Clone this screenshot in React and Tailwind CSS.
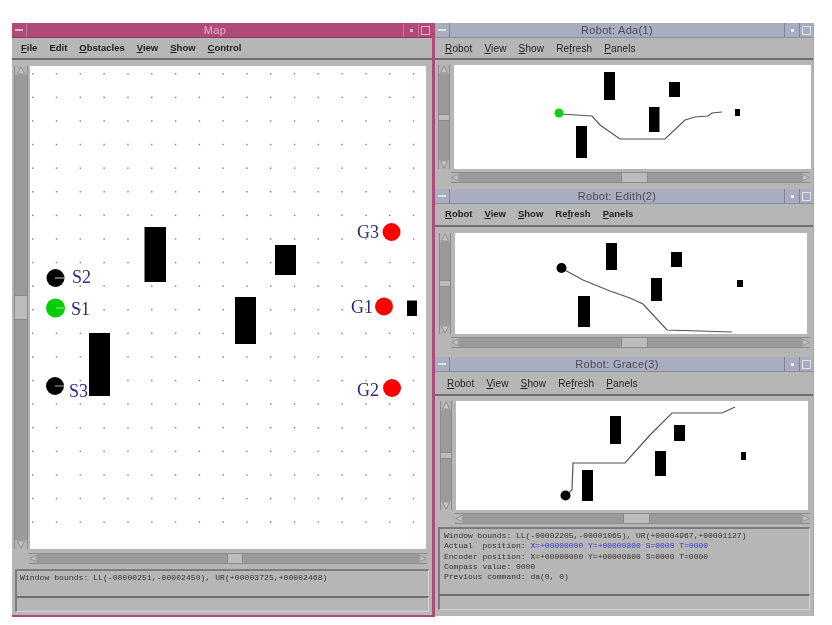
import React from 'react';

// Dot grid of the map canvas, in page coordinates
const DOT_XS = Array.from({ length: 17 }, (_, i) => 32 + i * 23.8);
const DOT_YS = Array.from({ length: 20 }, (_, i) => 73 + i * 23.6);

const MAP_RECTS = [
  [144.5, 227, 21.5, 55],
  [275, 245, 21, 30],
  [235, 297, 21, 47],
  [89, 333, 21, 63],
  [407, 300.5, 10, 15.5],
];

const MAP_LABELS = [
  ['S2', 72, 283],
  ['S1', 71, 315],
  ['S3', 69, 397],
  ['G3', 357, 238],
  ['G1', 351, 313],
  ['G2', 357, 396],
];

const ROBOTS = {
  ada: {
    box: '454 65 357 104',
    rects: [[604, 72, 11, 28], [669, 82, 11, 15], [649, 107, 10.5, 25], [576, 126, 11, 32], [735, 109, 5, 7]],
    robot: [559, 113, 4.5, '#10d010'],
    path: '560,114 592,116 600,125 620,139 665,139 685,120 695,117 708,116 712,113 722,112',
  },
  edith: {
    box: '455 233 352 101',
    rects: [[606, 243, 11, 27], [671, 252, 11, 15], [651, 278, 11, 23], [578, 296, 12, 31], [737, 280, 6, 7]],
    robot: [561.5, 268, 5, '#000'],
    path: '561,268 583,280 610,291 630,298 643,304 667,330 700,331 732,332',
  },
  grace: {
    box: '456 401 352 109',
    rects: [[610, 416, 11, 28], [674, 425, 11, 16], [655, 451, 11, 25], [582, 470, 11, 31], [741, 452, 5, 8]],
    robot: [565.5, 495.5, 5, '#000'],
    path: '566,495 572,490 573,463 625,463 650,435 672,413 722,413 735,407',
  },
};

function TitleBar({ title, pink }) {
  const bar = pink ? 'bg-[#b04a78] text-[#e2b4c8] border-[#8e3a60]' : 'bg-[#a9adc0] text-[#4c4c54] border-[#8a8d9e]';
  const btn = pink ? 'border-[#c77a9c]' : 'border-[#7f8294]';
  return (
    <div className={`flex h-[15px] shrink-0 items-stretch border-b ${bar}`}>
      <div className={`flex w-[15px] shrink-0 items-center justify-center border-r ${btn}`}>
        <span className={`h-[2px] w-[8px] ${pink ? 'bg-[#e0b0c4]' : 'bg-[#dfe0e8]'}`} />
      </div>
      <div className="flex-1 text-center font-['Liberation_Sans',sans-serif] text-[11px] leading-[14px] tracking-[0.3px]">{title}</div>
      <div className={`flex w-[15px] shrink-0 items-center justify-center border-l ${btn}`}>
        <span className={`h-[3px] w-[3px] ${pink ? 'bg-[#e0b0c4]' : 'bg-[#eceded]'}`} />
      </div>
      <div className={`flex w-[14px] shrink-0 items-center justify-center border-l ${btn}`}>
        <span className={`h-[9px] w-[9px] border ${pink ? 'border-[#e0b0c4]' : 'border-[#dfe0e8]'}`} />
      </div>
    </div>
  );
}

function MenuBar({ items, bold, height, left }) {
  return (
    <div
      className={`flex shrink-0 items-center gap-3 border-b-2 border-[#6e6e6e] bg-[#b6b6b6] font-['Liberation_Sans',sans-serif] text-[#222] ${bold ? 'text-[9.5px] font-bold' : 'text-[10px] tracking-[0.15px]'}`}
      style={{ height, paddingLeft: left }}
    >
      {items.map(([head, mark, tail]) => (
        <span key={head + mark + tail}>
          {head}
          <span className="underline">{mark}</span>
          {tail}
        </span>
      ))}
    </div>
  );
}

// Small triangle cap at the end of a scrollbar
function Arrow({ points, className }) {
  return (
    <svg viewBox="0 0 10 10" className={`shrink-0 bg-[#b4b4b4] ${className}`}>
      <polygon points={points} fill="#c4c4c4" stroke="#8a8a8a" strokeWidth="1" />
    </svg>
  );
}

function HScroll({ before, after, thumb }) {
  return (
    <div className="flex h-[11px] items-stretch border-y border-[#8b8b8b] bg-[#9a9a9a]">
      <Arrow points="1,5 9,1 9,9" className="w-[8px]" />
      <span style={{ flexGrow: before }} />
      <span className="shrink-0 border-x border-[#8b8b8b] bg-[#bcbcbc]" style={{ width: thumb }} />
      <span style={{ flexGrow: after }} />
      <Arrow points="9,5 1,1 1,9" className="w-[8px]" />
    </div>
  );
}

function VScroll({ before, after, width, thumb }) {
  return (
    <div className="flex shrink-0 flex-col items-stretch border-x border-[#8b8b8b] bg-[#9a9a9a]" style={{ width }}>
      <Arrow points="5,1 1,9 9,9" className="h-[9px] w-full" />
      <span style={{ flexGrow: before }} />
      <span className="shrink-0 border-y border-[#8b8b8b] bg-[#bcbcbc]" style={{ height: thumb }} />
      <span style={{ flexGrow: after }} />
      <Arrow points="5,9 1,1 9,1" className="h-[9px] w-full" />
    </div>
  );
}

function MapCanvas() {
  return (
    <svg viewBox="30 66 396 483" className="h-[483px] w-[396px] shrink-0 bg-white">
      {DOT_YS.map((y) => DOT_XS.map((x) => (
        <rect key={`${x}-${y}`} x={x} y={y} width="1.5" height="1.5" fill="#8c8c8c" />
      )))}
      {MAP_RECTS.map(([x, y, w, h]) => <rect key={x} x={x} y={y} width={w} height={h} fill="#000" />)}
      <circle cx="55.5" cy="278" r="9" fill="#000" />
      <line x1="55" y1="278" x2="64" y2="278" stroke="#888" strokeWidth="1.5" />
      <circle cx="55.5" cy="308" r="9.5" fill="#00d000" />
      <line x1="56" y1="308" x2="64" y2="308" stroke="#9ee69e" strokeWidth="1" />
      <circle cx="55" cy="386" r="9" fill="#000" />
      <line x1="55" y1="386" x2="64" y2="386" stroke="#aaa" strokeWidth="1" />
      <circle cx="391.5" cy="232" r="9" fill="#ff0000" />
      <circle cx="384" cy="306.5" r="9" fill="#ff0000" />
      <circle cx="392" cy="388" r="9" fill="#ff0000" />
      {MAP_LABELS.map(([text, x, y]) => (
        <text key={text} x={x} y={y} fill="#2a2a80" fontSize="18" fontFamily="'Liberation Serif', serif">{text}</text>
      ))}
    </svg>
  );
}

function RobotCanvas({ data, className }) {
  const [cx, cy, r, fill] = data.robot;
  return (
    <svg viewBox={data.box} className={`shrink-0 bg-white ${className}`}>
      {data.rects.map(([x, y, w, h]) => <rect key={x} x={x} y={y} width={w} height={h} fill="#000" />)}
      <polyline points={data.path} fill="none" stroke="#555" strokeWidth="1.2" />
      <circle cx={cx} cy={cy} r={r} fill={fill} />
    </svg>
  );
}

const ROBOT_MENU = [['', 'R', 'obot'], ['', 'V', 'iew'], ['', 'S', 'how'], ['Re', 'f', 'resh'], ['', 'P', 'anels']];

function MapWindow() {
  return (
    <div className="flex h-[594px] w-[423px] shrink-0 flex-col border-r-[3px] border-b-[2px] border-[#b04a78] bg-[#b6b6b6]">
      <TitleBar title="Map" pink />
      <MenuBar
        items={[['', 'F', 'ile'], ['Edit', '', ''], ['', 'O', 'bstacles'], ['', 'V', 'iew'], ['', 'S', 'how'], ['', 'C', 'ontrol']]}
        bold
        height={22}
        left={9}
      />
      <div className="flex items-stretch gap-[2px] pl-[2px] pt-[6px]">
        <VScroll before={220} after={220} width={14} thumb={25} />
        <MapCanvas />
      </div>
      <div className="ml-[17px] mr-[5px] mt-[4px]">
        <HScroll before={190} after={176} thumb={16} />
      </div>
      <div className="mx-[3px] mt-[5px] h-[27px] border-l-2 border-r border-t-2 border-l-[#7c7c7c] border-r-[#d4d4d4] border-t-[#7c7c7c] px-[3px] pt-[1px] font-['Liberation_Mono',monospace] text-[8px] leading-[12px] tracking-[0.08px] text-[#333]">
        Window bounds: LL(-00000251,-00002450), UR(+00003725,+00002468)
      </div>
      <div className="mx-[3px] h-[16px] border-l-2 border-r border-t-2 border-b border-l-[#7c7c7c] border-r-[#d4d4d4] border-t-[#6e6e6e] border-b-[#d4d4d4]" />
    </div>
  );
}

function RobotWindow({ title, height, menuHeight, menuLeft, bold, data, gapTop, pad, canvasClass, scrollWidth, scrollLeft, children }) {
  return (
    <div className="flex shrink-0 flex-col border-r border-[#a2a6b8] bg-[#b6b6b6]" style={{ height }}>
      <TitleBar title={title} />
      <MenuBar items={ROBOT_MENU} bold={bold} height={menuHeight} left={menuLeft} />
      <div className="flex items-stretch gap-[4px]" style={{ paddingTop: gapTop, paddingLeft: pad }}>
        <VScroll before={46} after={46} width={scrollWidth} thumb={7} />
        <RobotCanvas data={data} className={canvasClass} />
      </div>
      <div className="mr-[3px] mt-[3px]" style={{ marginLeft: scrollLeft }}>
        <HScroll before={160} after={152} thumb={27} />
      </div>
      {children}
    </div>
  );
}

export default function App() {
  return (
    <div className="flex h-[625px] w-[832px] items-start bg-white pl-[12px] pt-[23px] blur-[0.3px]">
      <MapWindow />
      <div className="flex w-[379px] flex-col">
        <RobotWindow
          title="Robot: Ada(1)"
          height={166}
          menuHeight={22}
          menuLeft={10}
          data={ROBOTS.ada}
          gapTop={5}
          pad={3}
          scrollWidth={12}
          scrollLeft={16}
          canvasClass="h-[104px] w-[357px]"
        />
        <RobotWindow
          title="Robot: Edith(2)"
          height={168}
          menuHeight={23}
          menuLeft={10}
          bold
          data={ROBOTS.edith}
          gapTop={6}
          pad={4}
          scrollWidth={12}
          scrollLeft={16}
          canvasClass="h-[101px] w-[352px]"
        />
        <RobotWindow
          title="Robot: Grace(3)"
          height={259}
          menuHeight={24}
          menuLeft={12}
          data={ROBOTS.grace}
          gapTop={5}
          pad={5}
          scrollWidth={12}
          scrollLeft={20}
          canvasClass="h-[109px] w-[352px]"
        >
          <div className="mx-[3px] mt-[3px] h-[67px] whitespace-pre border-l-2 border-r border-t-2 border-l-[#7c7c7c] border-r-[#d4d4d4] border-t-[#7c7c7c] px-[4px] pt-[2px] font-['Liberation_Mono',monospace] text-[8px] leading-[10.3px] text-[#333]">
            <div>Window bounds: LL(-00002205,-00001065), UR(+00004967,+00001127)</div>
            <div>
              Actual  position: <span className="text-[#3a3ad8]">X=+00000000 Y=+00000800 S=0000 T=0000</span>
            </div>
            <div>Encoder position: X=+00000000 Y=+00000800 S=0000 T=0000</div>
            <div>Compass value: 0000</div>
            <div>Previous command: da(0, 0)</div>
          </div>
          <div className="mx-[3px] h-[16px] border-l-2 border-r border-t-2 border-b border-l-[#7c7c7c] border-r-[#d4d4d4] border-t-[#6e6e6e] border-b-[#d4d4d4]" />
        </RobotWindow>
      </div>
    </div>
  );
}
